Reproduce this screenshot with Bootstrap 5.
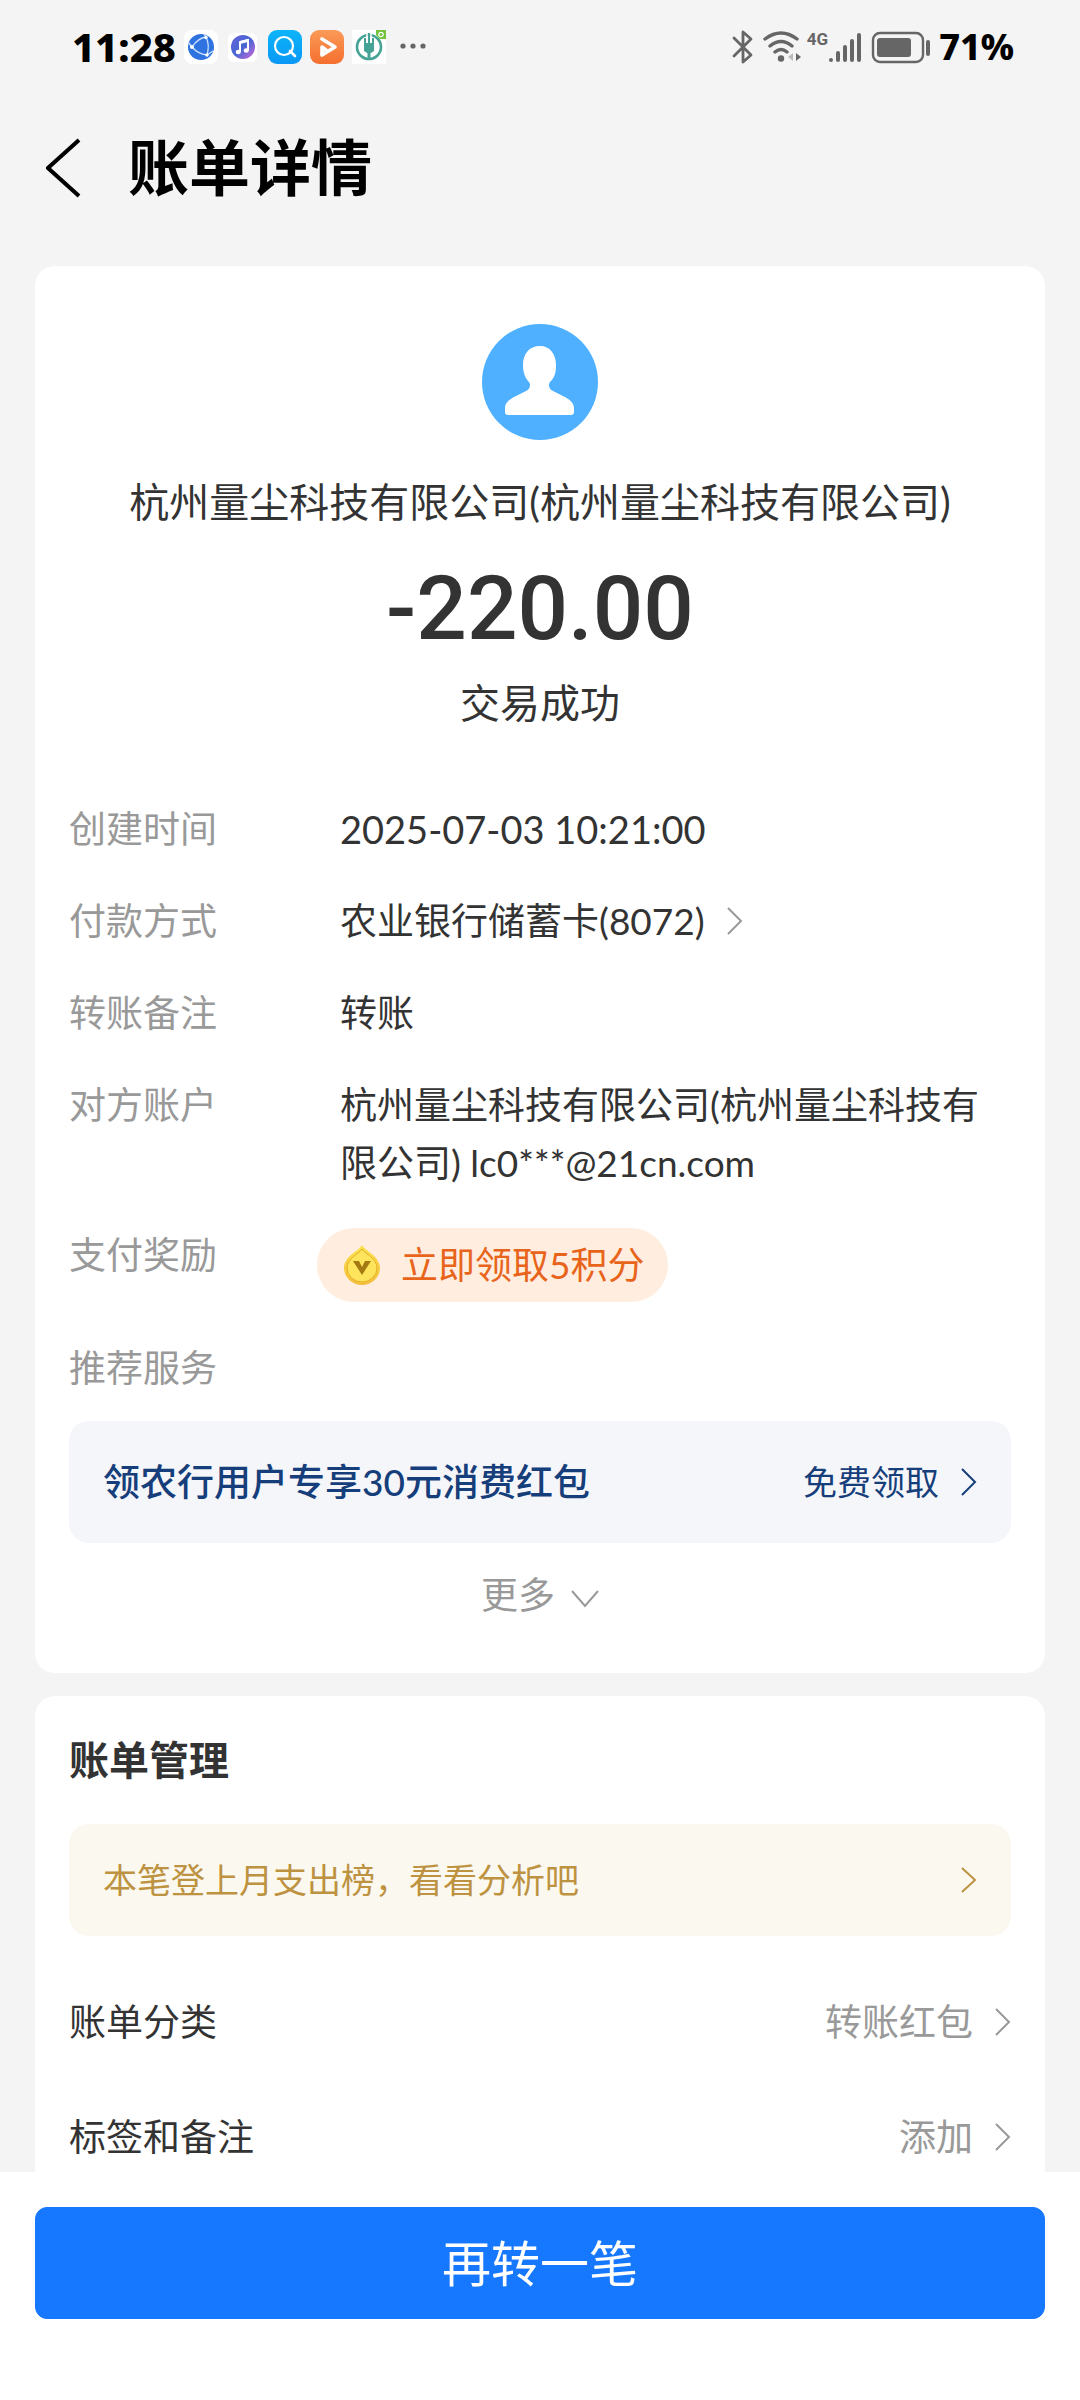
<!DOCTYPE html>
<html lang="zh-CN">
<head>
<meta charset="utf-8">
<meta name="viewport" content="width=device-width, initial-scale=1">
<title>账单详情</title>
<link rel="stylesheet" href="https://cdn.jsdelivr.net/npm/bootstrap@5.3.0/dist/css/bootstrap.min.css">
<style>
  body { font-family: Lato, "Noto Sans CJK SC", sans-serif; font-size: 37px; line-height: 58px; color: #333; background: #f4f4f4; }
  a { color: inherit; }
  .btn { font-family: inherit; font-size: 37px; line-height: 58px; }
  svg { display: block; flex: none; }
  .chev { fill: none; stroke: currentColor; stroke-width: 2; }

  .status-bar { height: 92px; padding: 2px 66px 0 72px; font-family: "Noto Sans", "Noto Sans CJK SC", sans-serif; font-weight: 800; color: #000; }
  .clock { font-size: 40px; margin-right: 8px; }
  .power { font-size: 36px; }
  .net { font-family: Roboto, sans-serif; font-size: 17px; line-height: 18px; font-weight: 700; color: #666; }

  .title-bar { height: 150px; padding: 2px 46px 0; color: #000; }
  .title-bar h1 { font-size: 61px; line-height: 80px; font-weight: 700; }

  .scroll-area { min-height: 0; padding: 24px 35px 0; scrollbar-width: none; }
  .scroll-area::-webkit-scrollbar { display: none; }
  .panel { background: #fff; border-radius: 20px; padding: 0 34px; }
  .panel-detail { padding-top: 58px; padding-bottom: 49px; margin-bottom: 23px; }
  .panel-manage { padding-top: 34px; }

  .payee { font-size: 40px; line-height: 60px; margin: 32px 0; }
  .amount { font-family: Roboto, sans-serif; font-size: 89px; line-height: 90px; font-weight: 500; margin-bottom: 19px; }
  .state { font-size: 40px; line-height: 60px; margin-bottom: 67px; }

  .facts { gap: 34px; }
  .facts dt { width: 271px; flex: none; font-weight: 400; color: #999; }
  .latin { font-size: 38px; }
  .reward { height: 74px; margin: 2px 0 3px -23px; padding: 0 24px 0 26px; gap: 20px; --bs-btn-bg: #ffeedf; --bs-btn-color: #e8641b; }
  .tile { border-radius: 20px; padding: 0 34px; font-size: 34px; }
  .tile-offer { height: 122px; margin: 24px 0 23px; background: #f5f6fa; color: #153e7a; }
  .tile-offer strong { font-size: 37px; font-weight: 500; }
  .tile-rank { height: 112px; margin: 34px 0 28px; background: #fbf8f0; color: #bd9240; }
  .gap-link { gap: 22px; }
  .muted { color: #999; }

  .panel-manage h2 { font-size: 40px; line-height: 60px; font-weight: 700; }
  .setting { height: 115px; }

  .action-bar { background: #fff; padding: 35px 35px 81px; }
  .btn-again { --bs-btn-bg: #1677ff; --bs-btn-border-color: #1677ff; height: 112px; border-radius: 12px; font-size: 49px; line-height: 60px; padding: 0; color: #fff; }
</style>
</head>
<body>
<div class="d-flex flex-column vh-100">

  <div class="status-bar flex-shrink-0 d-flex align-items-center justify-content-between">
    <div class="d-flex align-items-center">
      <span class="clock">11:28</span>
      <div class="d-flex align-items-center gap-2">
        <svg width="34" height="34" viewBox="0 0 34 34" aria-hidden="true">
          <rect width="34" height="34" rx="8" fill="#fff"/><circle cx="17" cy="17" r="13" fill="#2f73e0"/>
          <g fill="none" stroke="#cfe2ff" stroke-width="1.3"><path d="M8 17Q14 8 22 7M8 17Q14 24 23 25M22 7Q26 15 23 25M8 17L4 12M22 7L20 4M23 25L29 21"/></g>
          <g fill="#fff"><circle cx="8" cy="17" r="2"/><circle cx="22" cy="7.500" r="1.700"/><circle cx="23" cy="25" r="1.700"/></g>
        </svg>
        <svg width="34" height="34" viewBox="0 0 34 34" aria-hidden="true">
          <defs><linearGradient id="music" x1="0" y1="0" x2="1" y2="1"><stop offset="0" stop-color="#6a60dc"/><stop offset=".5" stop-color="#4667d2"/><stop offset="1" stop-color="#d667dc"/></linearGradient></defs>
          <rect x="2" y="3" width="29" height="29" rx="6" fill="#fff"/><circle cx="17" cy="17" r="12" fill="url(#music)"/>
          <path d="M14 22V12l8-2v10" fill="none" stroke="#fff" stroke-width="2"/><path d="M14 11l8-2v3l-8 2z" fill="#fff"/><ellipse cx="12.300" cy="22" rx="2.600" ry="2.200" fill="#fff"/><ellipse cx="20.300" cy="20.500" rx="2.600" ry="2.200" fill="#fff"/>
        </svg>
        <svg width="34" height="34" viewBox="0 0 34 34" aria-hidden="true">
          <defs><linearGradient id="find" x1="0" y1="0" x2="0" y2="1"><stop offset="0" stop-color="#0cb4f8"/><stop offset="1" stop-color="#0a98f6"/></linearGradient></defs>
          <rect width="34" height="34" rx="9" fill="url(#find)"/><circle cx="16" cy="16" r="9" fill="none" stroke="#fff" stroke-width="2.200"/><path d="M22 21l5 5" stroke="#fff" stroke-width="2.600" stroke-linecap="round"/>
        </svg>
        <svg width="34" height="34" viewBox="0 0 34 34" aria-hidden="true">
          <defs><linearGradient id="clip" x1="0" y1="0" x2="0" y2="1"><stop offset="0" stop-color="#fb9a58"/><stop offset="1" stop-color="#f56f2e"/></linearGradient></defs>
          <rect width="34" height="34" rx="9" fill="url(#clip)"/>
          <path d="M12 9L25 17 12 25V17l4 3" fill="none" stroke="#fff" stroke-width="3.600" stroke-linejoin="round" stroke-linecap="round"/>
        </svg>
        <svg width="34" height="34" viewBox="0 0 34 34" aria-hidden="true">
          <rect width="34" height="34" fill="#fff"/><circle cx="17" cy="17" r="12" fill="none" stroke="#45a396" stroke-width="2.600"/>
          <path d="M17 20v10" stroke="#45a396" stroke-width="3"/><path d="M12 13h10v8l-3 2h-4l-3-2z" fill="#45a396"/><path d="M13 8v7M17 3v11M21 8v7" stroke="#45a396" stroke-width="2"/><path d="M15 4v9M19 4v9" stroke="#fff" stroke-width="1.500"/>
          <path d="M24 0h10v9h-6l-4-4z" fill="#72c43c"/><circle cx="29" cy="4.500" r="2.200" fill="none" stroke="#fff" stroke-width="1.200"/>
        </svg>
        <svg width="38" height="34" viewBox="0 0 38 34" fill="#666" aria-hidden="true"><circle cx="9" cy="16" r="2.600"/><circle cx="19" cy="16" r="2.600"/><circle cx="29" cy="16" r="2.600"/></svg>
      </div>
    </div>
    <div class="d-flex align-items-center">
      <svg width="21" height="36" viewBox="0 0 21 36" fill="none" stroke="#666" stroke-width="2.800" stroke-linejoin="round" stroke-linecap="round" class="me-2" aria-hidden="true"><path d="M2 9l17 17-8 7V3l8 7L2 27"/></svg>
      <svg width="42" height="34" viewBox="0 0 42 34" fill="none" stroke="#666" stroke-width="3.400" stroke-linecap="round" class="me-1" aria-hidden="true">
        <path d="M4 9Q20-3 36 9M9 16Q20 7 31 16M14 22Q20 17 26 22"/><circle cx="20" cy="28.500" r="3.200" fill="#666" stroke="none"/><path d="M32 23v8l-5-4z" fill="#bbb" stroke="none"/><path d="M35 23v8l5-4z" fill="#666" stroke="none"/>
      </svg>
      <span class="net mb-3">4G</span>
      <svg width="33" height="34" viewBox="0 0 33 34" stroke="#666" stroke-width="4" stroke-linecap="round" aria-hidden="true"><path d="M3 30v0M10 23v7M17 17v13M24 11v19M31 5v25"/></svg>
      <svg width="62" height="34" viewBox="0 0 62 34" class="ms-2 me-2" aria-hidden="true">
        <rect x="4" y="3" width="50" height="29" rx="7" fill="none" stroke="#666" stroke-width="2.400"/><rect x="8" y="8" width="34" height="19" rx="3" fill="#666"/><rect x="57" y="10" width="4" height="16" rx="2" fill="#666"/>
      </svg>
      <span class="power">71%</span>
    </div>
  </div>

  <header class="title-bar flex-shrink-0 d-flex align-items-center">
    <button type="button" class="btn p-0 border-0 text-black" aria-label="返回">
      <svg width="82" height="60" viewBox="0 0 82 60" fill="none" stroke="currentColor" stroke-width="4" aria-hidden="true"><path d="M33 2L2 30l31 28"/></svg>
    </button>
    <h1 class="m-0">账单详情</h1>
  </header>

  <main class="scroll-area flex-grow-1 overflow-auto">
    <section class="panel panel-detail">
      <div class="text-center">
        <svg class="mx-auto" width="116" height="116" viewBox="0 0 116 116" aria-hidden="true">
          <circle cx="58" cy="58" r="58" fill="#4eb0ff"/>
          <path d="M58 22C47 22 41 30 41 41c0 9 3 14 6 17 2 3 1 7-3 9L32 73c-7 4-9 7-9 12v3q0 3 3 3h63q3 0 3-3v-3c0-5-2-8-9-12L71 67c-4-2-5-6-3-9 4-4 6-8 6-17 0-11-6-19-16-19z" fill="#fff"/>
        </svg>
        <div class="payee">杭州量尘科技有限公司(杭州量尘科技有限公司)</div>
        <div class="amount">-220.00</div>
        <div class="state">交易成功</div>
      </div>
      <dl class="facts d-flex flex-column m-0">
        <div class="d-flex"><dt>创建时间</dt><dd class="m-0 latin">2025-07-03 10:21:00</dd></div>
        <div class="d-flex"><dt>付款方式</dt><dd class="m-0"><a href="#" class="d-flex align-items-center gap-link text-decoration-none">农业银行储蓄卡(8072)<svg class="chev muted" width="16" height="28" viewBox="0 0 16 28" aria-hidden="true"><path d="M1 1l13 13L1 27"/></svg></a></dd></div>
        <div class="d-flex"><dt>转账备注</dt><dd class="m-0">转账</dd></div>
        <div class="d-flex"><dt>对方账户</dt><dd class="m-0">杭州量尘科技有限公司(杭州量尘科技有限公司) lc0***@21cn.com</dd></div>
        <div class="d-flex"><dt>支付奖励</dt><dd class="m-0">
          <button type="button" class="reward btn rounded-pill border-0 d-flex align-items-center">
            <svg width="38" height="42" viewBox="0 0 38 42" aria-hidden="true">
              <defs><linearGradient id="drop" x1="0" y1="0" x2="0" y2="1"><stop offset="0" stop-color="#fbe24e"/><stop offset="1" stop-color="#f5bd3c"/></linearGradient></defs>
              <path d="M19 1C22 7 37 12 37 24a18 17 0 0 1-36 0C1 12 16 7 19 1z" fill="url(#drop)"/>
              <path d="M19 5c3 5 15 9 15 19a15 14 0 0 1-30 0C4 14 16 10 19 5z" fill="#fde45c" stroke="#e3b126"/>
              <path d="M10 17h6l3 6 3-6h6l-9 14z" fill="#a47a12"/>
            </svg>立即领取5积分</button>
        </dd></div>
        <div class="d-flex"><dt>推荐服务</dt></div>
      </dl>
      <a href="#" class="tile tile-offer d-flex align-items-center justify-content-between text-decoration-none">
        <strong>领农行用户专享30元消费红包</strong>
        <span class="d-flex align-items-center gap-link">免费领取<svg class="chev" width="16" height="28" viewBox="0 0 16 28" aria-hidden="true"><path d="M1 1l13 13L1 27"/></svg></span>
      </a>
      <button type="button" class="btn border-0 p-0 mx-auto muted d-flex align-items-center gap-3">更多<svg class="chev mt-2" width="28" height="18" viewBox="0 0 28 18" aria-hidden="true"><path d="M1 1l13 15L27 1"/></svg></button>
    </section>

    <section class="panel panel-manage">
      <h2 class="m-0">账单管理</h2>
      <a href="#" class="tile tile-rank d-flex align-items-center justify-content-between text-decoration-none">本笔登上月支出榜，看看分析吧<svg class="chev" width="16" height="28" viewBox="0 0 16 28" aria-hidden="true"><path d="M1 2l13 12L1 26"/></svg></a>
      <a href="#" class="setting d-flex align-items-center justify-content-between text-decoration-none">账单分类<span class="muted d-flex align-items-center gap-link">转账红包<svg class="chev" width="16" height="28" viewBox="0 0 16 28" aria-hidden="true"><path d="M1 1l13 13L1 27"/></svg></span></a>
      <a href="#" class="setting d-flex align-items-center justify-content-between text-decoration-none">标签和备注<span class="muted d-flex align-items-center gap-link">添加<svg class="chev" width="16" height="28" viewBox="0 0 16 28" aria-hidden="true"><path d="M1 1l13 13L1 27"/></svg></span></a>
    </section>
  </main>

  <footer class="action-bar flex-shrink-0">
    <button type="button" class="btn btn-primary btn-again w-100">再转一笔</button>
  </footer>
</div>
<script src="https://cdn.jsdelivr.net/npm/bootstrap@5.3.0/dist/js/bootstrap.bundle.min.js"></script>
</body>
</html>
